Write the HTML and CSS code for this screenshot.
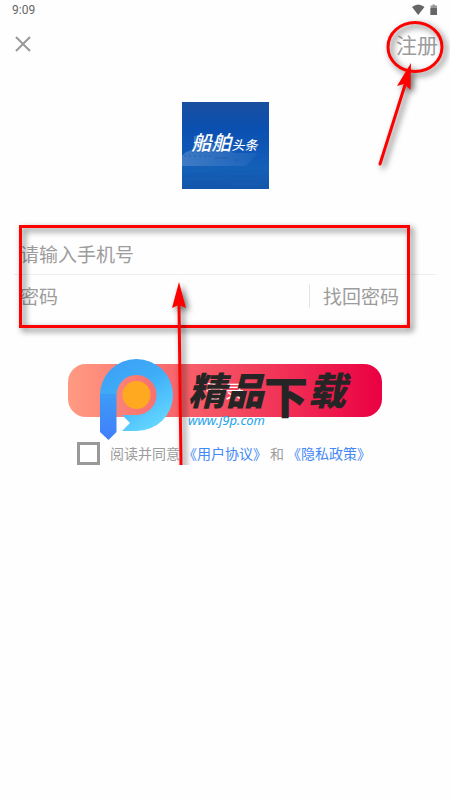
FILE: index.html
```html
<!DOCTYPE html>
<html lang="zh-CN">
  <head>
    <meta charset="UTF-8" />
    <meta name="viewport" content="width=device-width, initial-scale=1.0" />
    <title>船舶头条 - 登录</title>
    <link rel="stylesheet" href="styles.css">
  </head>
  <body>
    <div class="status-bar">
      <span>9:09</span>
      <svg class="status-icons" width="26" height="12" viewBox="0 0 26 12" aria-hidden="true">
        <path d="M0 3 Q6 -2 12.500 3 L6.200 11 Z" fill="#666" />
        <path d="M20.500 1.500 V.5 H23 V1.500 H25 V11 H18.500 V1.500 Z" fill="#999" />
        <path d="M18.500 4 H25 V11 H18.500 Z" fill="#666" />
      </svg>
    </div>

    <header class="top-bar">
      <button type="button" class="close-btn" aria-label="关闭">
        <svg width="16" height="16" viewBox="0 0 16 16">
          <path d="M1 1 L15 15 M15 1 L1 15" stroke="#999" stroke-width="2" fill="none" />
        </svg>
      </button>
      <div class="register">
        <a href="#register">注册</a>
        <svg class="mark mark-circle" width="90" height="160" viewBox="0 0 90 160" aria-hidden="true">
          <ellipse cx="45" cy="32" rx="27" ry="24.500" fill="none" stroke="#f00" stroke-width="3" />
          <path d="M10 149 L35 70" stroke="#f00" stroke-width="3" stroke-linecap="round" />
          <path d="M41 48 L27 71 L34 69 L40.500 75 Z" fill="#f00" />
        </svg>
      </div>
    </header>

    <main>
      <div class="logo">
        <svg class="logo-ship" width="87" height="87" viewBox="0 0 87 87" aria-hidden="true">
          <defs>
            <linearGradient id="sky" x1="0" y1="0" x2="0" y2="1">
              <stop offset="0" stop-color="#1a4f9f" />
              <stop offset=".3" stop-color="#0b50b0" />
              <stop offset=".6" stop-color="#1059b8" />
              <stop offset=".75" stop-color="#1460b8" />
              <stop offset="1" stop-color="#1356ab" />
            </linearGradient>
            <linearGradient id="hull" x1="0" y1="0" x2="1" y2="0">
              <stop offset="0" stop-color="#5d8fcd" />
              <stop offset="1" stop-color="#1f66bd" />
            </linearGradient>
          </defs>
          <rect width="87" height="87" fill="url(#sky)" />
          <path d="M0 54 L4 50 L10 48 L12 42 L30 41 L34 46 L46 46 L52 51 L76 51 L64 64 L0 64 Z" fill="url(#hull)" opacity=".6" />
          <path d="M12 42 V34 H14 V42 M17 42 V37 H27 V42" fill="#6090cb" opacity=".6" />
          <path d="M2 54 H30 M12 47 H31 M10 50 H42" stroke="#2458a2" stroke-width="1" stroke-dasharray="2 3" opacity=".7" />
          <path d="M33 56 H46 M52 58 H57" stroke="#24589f" stroke-width="1" opacity=".7" />
          <path d="M4 69 H30 M44 72 H80 M5 77 H40 M50 82 H80" stroke="#2a70c4" stroke-width="1" opacity=".25" />
        </svg>
        <span class="logo-text">船舶<small>头条</small></span>
      </div>

      <form>
        <div class="fields">
          <div class="field">
            <input type="tel" id="phone" aria-label="手机号" placeholder="请输入手机号" />
          </div>
          <div class="field">
            <input type="password" id="password" aria-label="密码" placeholder="密码" />
            <a class="forgot" href="#forgot">找回密码</a>
          </div>
          <div class="mark mark-box"></div>
        </div>

        <div class="submit">
          <button type="submit" class="login-btn">登录</button>
          <div class="watermark">
            <svg width="76" height="84" viewBox="0 0 76 84" aria-hidden="true">
              <defs>
                <linearGradient id="ring" x1="0" y1="0" x2=".6" y2="1">
                  <stop offset="0" stop-color="#3d9cf5" />
                  <stop offset=".5" stop-color="#3eaef8" />
                  <stop offset="1" stop-color="#61d4ff" />
                </linearGradient>
                <linearGradient id="stem" x1="0" y1="0" x2="0" y2="1">
                  <stop offset="0" stop-color="#3d9cf5" />
                  <stop offset="1" stop-color="#407efb" />
                </linearGradient>
              </defs>
              <path d="M0 36 A36.500 36 0 1 1 37 72 H22 L30 64 L22 56 H37 A20 20 0 1 0 16.500 36 Z" fill="url(#ring)" />
              <path d="M0 35 H16.500 V73 L8.500 81 L0 73 Z" fill="url(#stem)" />
              <circle cx="36.500" cy="36" r="14" fill="#fea920" />
            </svg>
            <div class="watermark-text">
              <strong>精品<b>下</b>载</strong>
              <span>www.j9p.com</span>
            </div>
          </div>
        </div>

        <div class="agreement">
          <input type="checkbox" id="agree" />
          <label for="agree">阅读并同意<a href="#terms">《用户协议》</a>和<a href="#privacy">《隐私政策》</a></label>
        </div>

        <svg class="mark mark-arrow" width="30" height="200" viewBox="0 0 30 200" aria-hidden="true">
          <path d="M14 28 L16 191" stroke="#f00" stroke-width="3" stroke-linecap="round" />
          <path d="M14 6 L7 32 L14 29 L21 32 Z" fill="#f00" />
        </svg>
      </form>
    </main>
  </body>
</html>
```

FILE: styles.css
```css
* {
  box-sizing: border-box;
}
body {
  margin: 0;
  background: #fefefe;
  color: #9c9c9c;
  font-family: "Noto Sans CJK SC", sans-serif;
  overflow-x: hidden;
}
a {
  color: inherit;
  text-decoration: none;
}
.status-bar {
  display: flex;
  justify-content: space-between;
  align-items: center;
  height: 20px;
  padding: 0 12px;
  font-family: Roboto, sans-serif;
  font-size: 12px;
  color: #666;
}
.top-bar {
  display: flex;
  justify-content: space-between;
  align-items: center;
  height: 48px;
  padding: 0 12px;
}
.close-btn {
  display: flex;
  padding: 3px;
  border: none;
  background: none;
  cursor: pointer;
}
.register {
  position: relative;
  font-size: 21px;
  line-height: 30px;
}
.logo {
  position: relative;
  width: 87px;
  height: 87px;
  margin: 34px auto 45px;
}
.logo-ship {
  display: block;
}
.logo-text {
  position: absolute;
  top: 28px;
  left: 10px;
  color: #fff;
  font-size: 20px;
  font-weight: 500;
  font-style: italic;
  line-height: 24px;
  white-space: nowrap;
}
.logo-text small {
  font-size: 13px;
}
form {
  position: relative;
}
.fields {
  position: relative;
  margin: 0 14px;
}
.field {
  display: flex;
  align-items: center;
  height: 41px;
  padding-left: 6px;
}
.field:first-child {
  border-bottom: 1px solid #eee;
}
.field input {
  flex: 1;
  min-width: 0;
  padding: 0;
  border: none;
  outline: none;
  background: none;
  font-family: inherit;
  font-size: 19px;
  line-height: 28px;
}
.field input::placeholder {
  color: #9c9c9c;
}
.forgot {
  padding: 0 37px 0 13px;
  border-left: 1px solid #e5e5e5;
  font-size: 19px;
  line-height: 24px;
}
.submit {
  position: relative;
  margin: 48px 68px 0;
}
.login-btn {
  display: block;
  width: 100%;
  height: 53px;
  border: none;
  border-radius: 18px;
  background: linear-gradient(90deg, #ff9b82, #ea0042);
  color: #fff;
  font-family: inherit;
  font-size: 19px;
  cursor: pointer;
}
.watermark {
  position: absolute;
  top: -5px;
  left: 32px;
  display: flex;
  gap: 12px;
  pointer-events: none;
}
.watermark-text {
  display: flex;
  flex-direction: column;
  white-space: nowrap;
}
.watermark-text strong {
  height: 54px;
  color: #252525;
  font-size: 38px;
  font-weight: 900;
  font-style: italic;
  line-height: 60px;
}
.watermark-text b {
  font-size: 44px;
  font-style: normal;
  line-height: 44px;
  vertical-align: -9px;
}
.watermark-text span {
  color: #1ea4ea;
  font-family: "Noto Sans", sans-serif;
  font-size: 13px;
  font-style: italic;
  line-height: 14px;
}
.agreement {
  display: flex;
  align-items: center;
  gap: 10px;
  margin-top: 24px;
  padding-left: 77px;
  font-size: 14px;
  line-height: 24px;
  white-space: nowrap;
}
.agreement input {
  flex: none;
  width: 23px;
  height: 23px;
  margin: 0;
  border: 3px solid #999;
  background: #fff;
  appearance: none;
}
.agreement input:checked {
  background: #999;
}
.agreement a {
  margin: 0 3px;
  color: #4389f5;
}

/* red guide marks */
.mark {
  position: absolute;
  pointer-events: none;
  filter: drop-shadow(3px 3px 3px rgba(0, 0, 0, 0.6));
}
.mark-circle {
  top: -14px;
  right: -22px;
}
.mark-box {
  top: -9px;
  right: 26px;
  bottom: -12px;
  left: 5px;
  border: 3px solid #f00;
}
.mark-arrow {
  top: 42px;
  left: 165px;
}
```
